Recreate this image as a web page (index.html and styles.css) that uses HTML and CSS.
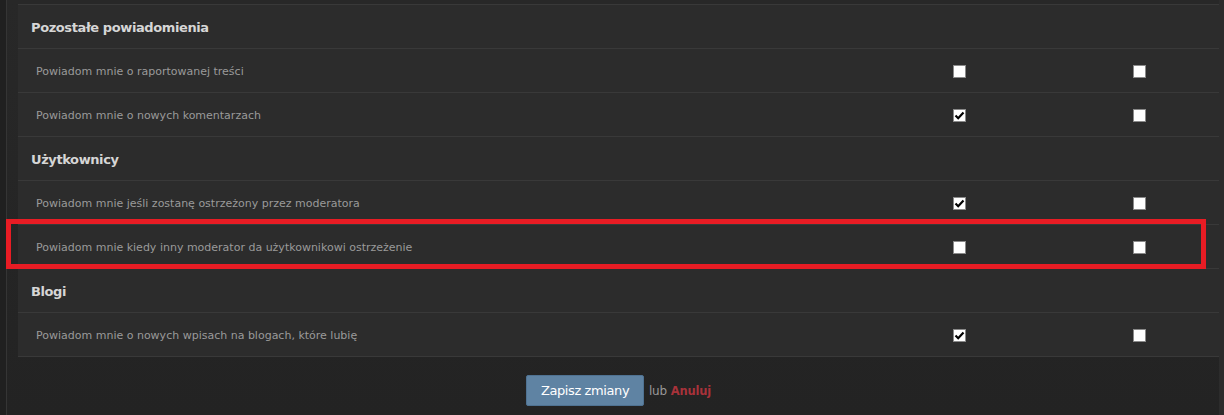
FILE: index.html
```html
<!DOCTYPE html>
<html lang="pl">
<head>
<meta charset="utf-8">
<link rel="stylesheet" href="styles.css">
<title>Powiadomienia</title>
</head>
<body>
<div class="page">
  <div class="edge"></div>
  <div class="main">
    <div class="table">
      <div class="head">Pozostałe powiadomienia</div>
      <div class="row">
        <span class="label">Powiadom mnie o raportowanej treści</span>
        <span class="cell"><span class="cb"></span></span>
        <span class="cell"><span class="cb"></span></span>
      </div>
      <div class="row">
        <span class="label">Powiadom mnie o nowych komentarzach</span>
        <span class="cell"><span class="cb on"><svg viewBox="0 0 13 13" width="13" height="13"><path d="M2.5 6.5 L5.2 9.2 L10.5 3.5" fill="none" stroke="#000" stroke-width="2.2"/></svg></span></span>
        <span class="cell"><span class="cb"></span></span>
      </div>
      <div class="head">Użytkownicy</div>
      <div class="row">
        <span class="label">Powiadom mnie jeśli zostanę ostrzeżony przez moderatora</span>
        <span class="cell"><span class="cb on"><svg viewBox="0 0 13 13" width="13" height="13"><path d="M2.5 6.5 L5.2 9.2 L10.5 3.5" fill="none" stroke="#000" stroke-width="2.2"/></svg></span></span>
        <span class="cell"><span class="cb"></span></span>
      </div>
      <div class="row">
        <span class="label">Powiadom mnie kiedy inny moderator da użytkownikowi ostrzeżenie</span>
        <span class="cell"><span class="cb"></span></span>
        <span class="cell"><span class="cb"></span></span>
      </div>
      <div class="head">Blogi</div>
      <div class="row">
        <span class="label">Powiadom mnie o nowych wpisach na blogach, które lubię</span>
        <span class="cell"><span class="cb on"><svg viewBox="0 0 13 13" width="13" height="13"><path d="M2.5 6.5 L5.2 9.2 L10.5 3.5" fill="none" stroke="#000" stroke-width="2.2"/></svg></span></span>
        <span class="cell"><span class="cb"></span></span>
      </div>
    </div>
    <div class="actions">
      <button class="save" type="button">Zapisz zmiany</button>
      <span class="or">lub</span>
      <a class="cancel" href="#">Anuluj</a>
    </div>
  </div>
  <div class="highlight"></div>
</div>
</body>
</html>
```
FILE: styles.css
```css
* { box-sizing: border-box; }
html, body { margin: 0; padding: 0; }
body {
  background: #222;
  font-family: "DejaVu Sans", Verdana, sans-serif;
  width: 1224px;
  height: 415px;
  overflow: hidden;
}
.page {
  position: relative;
  display: flex;
  height: 415px;
}
.edge {
  width: 7px;
  background: #202020;
  border-right: 1px solid #353535;
  flex: none;
}
.main {
  flex: 1;
  background: linear-gradient(#282828, #232323);
  padding: 4px 0 0 11px;
  border-right: 5px solid #2c2c2c;
}
.table {
  border-top: 1px solid #393939;
}
.head, .row {
  height: 44px;
  background: #2c2c2c;
  border-bottom: 1px solid #393939;
}
.head {
  display: flex;
  align-items: center;
  padding: 2px 0 0 13px;
  font-family: "DejaVu Sans", Verdana, sans-serif;
  font-weight: bold;
  font-size: 13px;
  color: #d6d6d6;
  letter-spacing: -0.4px;
}
.row {
  display: grid;
  grid-template-columns: 1fr 201px 159px;
  align-items: center;
  padding-top: 1px;
}
.label {
  padding-left: 18px;
  font-size: 11px;
  color: #9a9a9a;
  letter-spacing: 0;
}
.cell {
  display: flex;
  justify-content: center;
}
.cb {
  width: 13px;
  height: 13px;
  background: #fff;
  border: 1px solid #8a8a8a;
  display: block;
  position: relative;
}
.cb svg {
  position: absolute;
  left: -1px;
  top: -1px;
}
.actions {
  display: flex;
  align-items: center;
  justify-content: center;
  gap: 4px;
  padding: 18px 0 0 0;
}
.save {
  width: 118px;
  height: 31px;
  background: #5f83a3;
  border: 1px solid #4f7292;
  border-radius: 2px;
  color: #fff;
  font-family: "DejaVu Sans", Verdana, sans-serif;
  font-size: 13px;
  padding: 0;
  letter-spacing: -0.4px;
  margin-right: 1px;
}
.or {
  color: #999;
  font-size: 12px;
  letter-spacing: -0.3px;
}
.cancel {
  color: #a8323a;
  font-weight: bold;
  font-size: 11.5px;
  letter-spacing: -0.2px;
  text-decoration: none;
}
.highlight {
  position: absolute;
  left: 6px;
  top: 219px;
  width: 1200px;
  height: 50px;
  border: 5px solid #e81c24;
  pointer-events: none;
}
```
